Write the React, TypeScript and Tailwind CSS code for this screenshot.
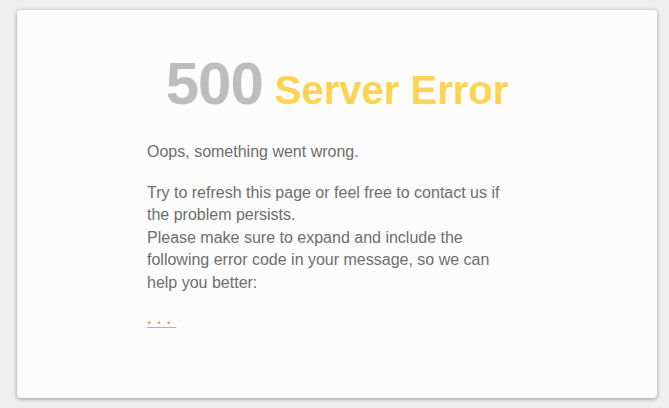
const ErrorCard = () => {
  return (
    <div className="ml-[17px] mt-[10px] h-[388px] w-[640px] rounded-[4px] bg-[#fcfcfc] shadow-[0_1px_4px_rgba(0,0,0,0.38)]">
      <div className="pt-[44px]">
        <h1 className="flex items-baseline justify-center gap-[12px] font-bold leading-none tracking-[-1px]">
          <span className="text-[60px] text-[#bdbdbd]">500</span>
          <span className="text-[40px] tracking-normal text-[#fdd452]">
            Server Error
          </span>
        </h1>

        <div className="ml-[130px] mt-[27px] w-[366px] text-[16px] leading-[22.5px] text-[#6e6e6e]">
          <p>Oops, something went wrong.</p>
          <p className="mt-[18px]">
            Try to refresh this page or feel free to contact us if the problem
            persists.
            <br />
            Please make sure to expand and include the following error code in
            your message, so we can help you better:
          </p>
          <p className="mt-[14px]">
            <a
              href="#"
              className="font-bold tracking-[5.3px] text-[#d4b24c] underline decoration-[#d4b24c] underline-offset-[3px]"
            >
              ...
            </a>
          </p>
        </div>
      </div>
    </div>
  )
}

export default function App() {
  return (
    <div className="h-[408px] w-[669px] overflow-hidden bg-[#efefef] pt-px font-['Liberation_Sans',Arial,sans-serif]">
      <div className="-mt-px">
        <ErrorCard />
      </div>
    </div>
  )
}
